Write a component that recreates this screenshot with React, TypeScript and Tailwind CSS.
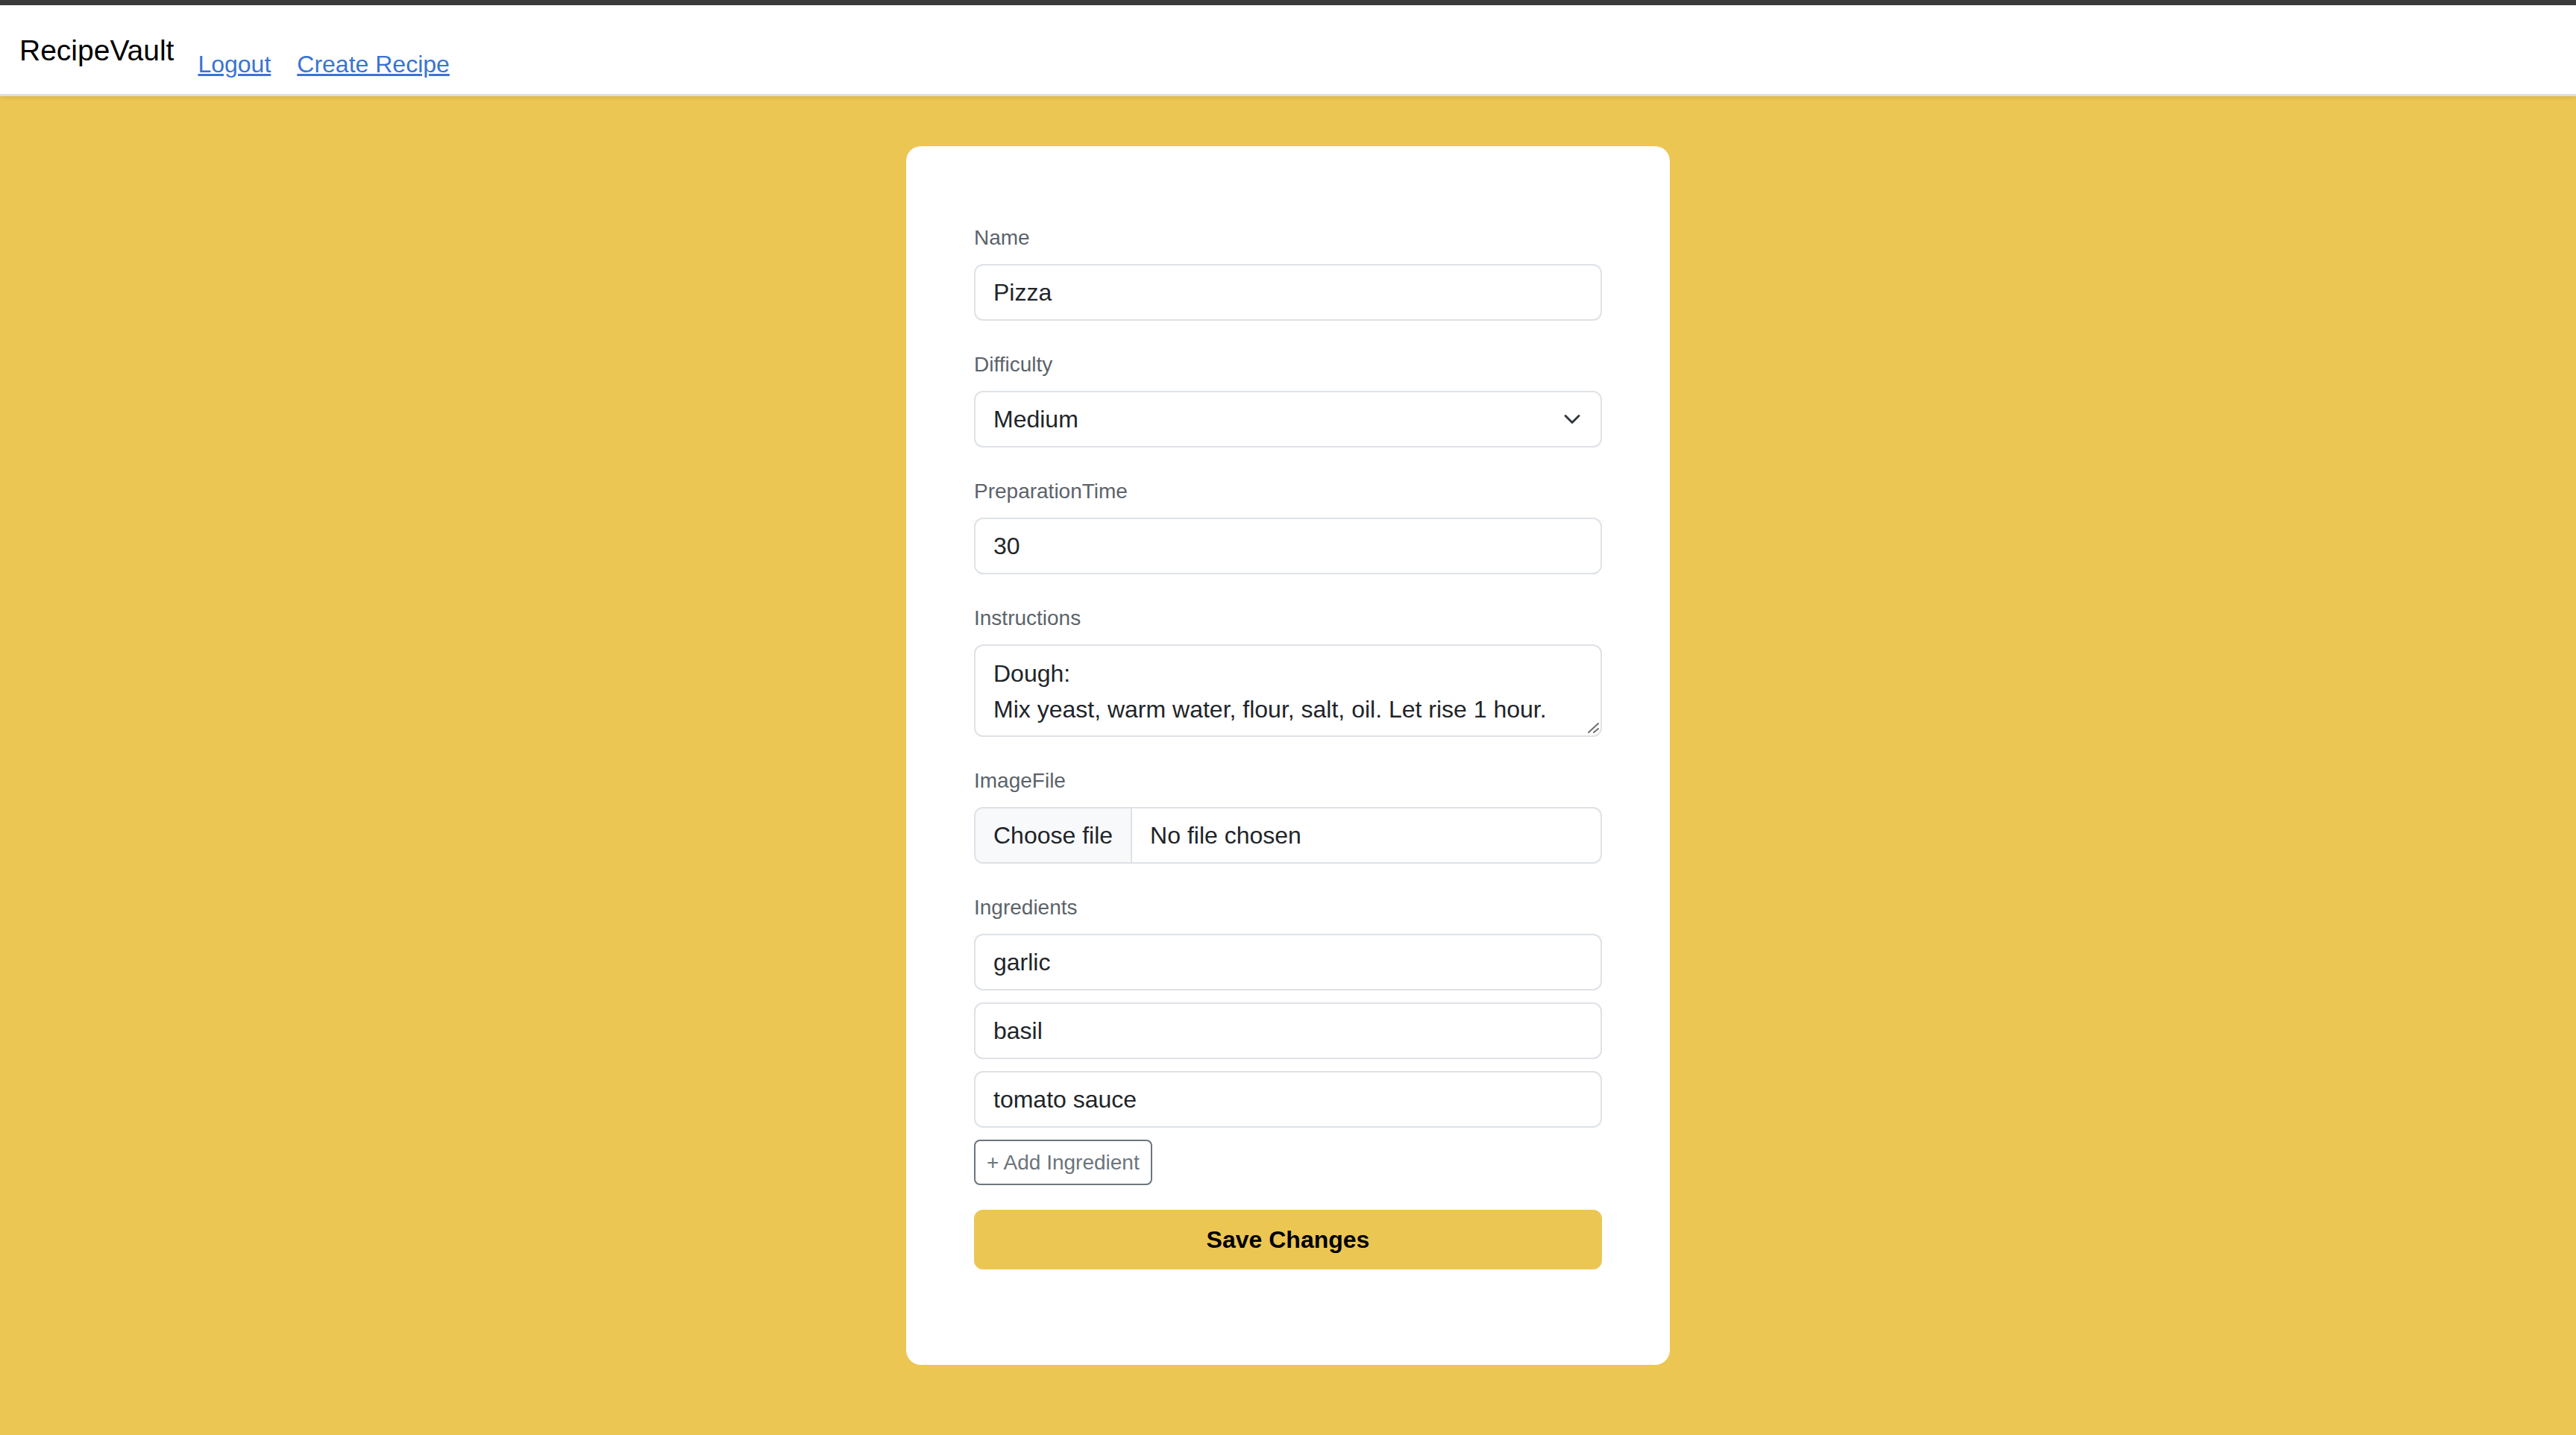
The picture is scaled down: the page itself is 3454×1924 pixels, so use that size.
import type { ReactNode } from 'react'

const Field = ({ label, children, last }: { label: string; children: ReactNode; last?: boolean }) => (
  <div className={last ? 'mb-[33px]' : 'mb-[36px]'}>
    <label className="mb-[12px] block text-[28px] leading-[46px] text-[#5c636a]">{label}</label>
    {children}
  </div>
)

const inputCls =
  'block h-[76px] w-full rounded-[12px] border-2 border-[#dee2e6] bg-white px-[24px] py-[12px] text-[32px] leading-[48px] text-[#212529] outline-none'

const ingredients = ['garlic', 'basil', 'tomato sauce']

export default function App() {
  return (
    <div className="min-h-screen bg-[#ecc653] font-['Liberation_Sans',Arial,sans-serif]">
      <div className="h-[7px] bg-[#3b3b3b]" />
      <nav className="flex h-[122px] items-start border-b-[3px] border-[#dedede] bg-white px-[26px] shadow-[0_2px_6px_rgba(0,0,0,0.08)]">
        <span className="mt-[37px] text-[39px] leading-[48px] text-black">RecipeVault</span>
        <a href="#" className="ml-[32px] mt-[55px] text-[32px] leading-[48px] text-[#3a74d0] underline">
          Logout
        </a>
        <a href="#" className="ml-[35px] mt-[55px] text-[32px] leading-[48px] text-[#3a74d0] underline">
          Create Recipe
        </a>
      </nav>

      <main className="flex justify-center pt-[67px] pb-[94px]">
        <form className="w-[1024px] rounded-[20px] bg-white px-[91px] pt-[100px] pb-[128px]">
          <Field label="Name">
            <input className={inputCls} defaultValue="Pizza" />
          </Field>

          <Field label="Difficulty">
            <div className="relative">
              <select className={`${inputCls} appearance-none`} defaultValue="Medium">
                <option>Easy</option>
                <option>Medium</option>
                <option>Hard</option>
              </select>
              <svg
                className="pointer-events-none absolute right-[28px] top-[26px]"
                width="24"
                height="24"
                viewBox="0 0 16 16"
                fill="none"
                stroke="#343a40"
                strokeWidth="2"
                strokeLinecap="round"
                strokeLinejoin="round"
              >
                <path d="m2 5 6 6 6-6" />
              </svg>
            </div>
          </Field>

          <Field label="PreparationTime">
            <input className={inputCls} defaultValue="30" />
          </Field>

          <Field label="Instructions">
            <div className="relative">
              <textarea
                className="block h-[124px] w-full resize-none rounded-[12px] border-2 border-[#dee2e6] bg-white px-[24px] pt-[13px] pb-[9px] text-[32px] leading-[48px] text-[#212529] outline-none"
                defaultValue={'Dough:\nMix yeast, warm water, flour, salt, oil. Let rise 1 hour.'}
              />
              <svg
                className="pointer-events-none absolute bottom-[2px] right-[2px]"
                width="20"
                height="20"
                viewBox="0 0 20 20"
                stroke="#6f6f6f"
                strokeWidth="2"
                strokeLinecap="round"
              >
                <path d="M4 16 17 4M11 16l6-5" />
              </svg>
            </div>
          </Field>

          <Field label="ImageFile">
            <div className="flex h-[76px] overflow-hidden rounded-[12px] border-2 border-[#dee2e6] text-[32px] text-[#212529]">
              <span className="flex items-center border-r-2 border-[#dee2e6] bg-[#f8f9fa] px-[24px]">Choose file</span>
              <span className="flex items-center pl-[24px]">No file chosen</span>
            </div>
          </Field>

          <Field label="Ingredients" last>
            {ingredients.map((item) => (
              <input key={item} className={`${inputCls} mb-[16px]`} defaultValue={item} />
            ))}
            <button
              type="button"
              className="h-[61px] rounded-[8px] border-2 border-[#6c757d] bg-white px-[15px] text-[28px] leading-[42px] text-[#6c757d]"
            >
              + Add Ingredient
            </button>
          </Field>

          <button
            type="button"
            className="block h-[80px] w-full rounded-[12px] bg-[#ecc653] text-[32px] font-bold text-black"
          >
            Save Changes
          </button>
        </form>
      </main>
    </div>
  )
}
